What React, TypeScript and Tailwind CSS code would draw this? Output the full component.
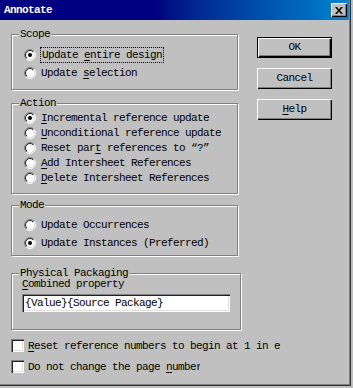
import React from "react";

const font = { fontFamily: '"Liberation Mono", "DejaVu Sans Mono", monospace' };

function Radio({ id, checked }: { id: string; checked?: boolean }) {
  return (
    <svg width="12" height="12" viewBox="0 0 12 12" className="shrink-0">
      <defs>
        <linearGradient id={id + "a"} x1="0" y1="0" x2="1" y2="1">
          <stop offset="0.5" stopColor="#808080" />
          <stop offset="0.5" stopColor="#ffffff" />
        </linearGradient>
        <linearGradient id={id + "b"} x1="0" y1="0" x2="1" y2="1">
          <stop offset="0.5" stopColor="#202020" />
          <stop offset="0.5" stopColor="#dfdfdf" />
        </linearGradient>
      </defs>
      <circle cx="6" cy="6" r="5.5" fill="none" stroke={`url(#${id}a)`} />
      <circle cx="6" cy="6" r="4.5" fill="#fff" stroke={`url(#${id}b)`} />
      {checked && <circle cx="6" cy="6" r="2" fill="#000" />}
    </svg>
  );
}

function Option({ id, checked, children }: { id: string; checked?: boolean; children: React.ReactNode }) {
  return (
    <div className="flex items-center gap-[5px] h-full">
      <Radio id={id} checked={checked} />
      <span className="leading-[12px] whitespace-nowrap">{children}</span>
    </div>
  );
}

function U({ children }: { children: React.ReactNode }) {
  return <span className="underline underline-offset-[2px]">{children}</span>;
}

function Group({ title, className, children }: { title: string; className: string; children: React.ReactNode }) {
  return (
    <fieldset
      className={
        "border border-[#808080] shadow-[1px_1px_0_#fff,inset_1px_1px_0_#fff] " + className
      }
    >
      <legend className="ml-[7px] px-[1px] leading-[12px] bg-[#c0c0c0] relative">{title}</legend>
      {children}
    </fieldset>
  );
}

function Button({ children, def }: { children: React.ReactNode; def?: boolean }) {
  return (
    <div
      className={
        "w-[75px] h-[21px] flex items-center justify-center bg-[#c0c0c0] " +
        (def
          ? "border border-black shadow-[inset_1px_1px_0_#fff,inset_-1px_-1px_0_#000,inset_-2px_-2px_0_#808080]"
          : "shadow-[inset_1px_1px_0_#fff,inset_-1px_-1px_0_#000,inset_-2px_-2px_0_#808080]")
      }
    >
      {children}
    </div>
  );
}

function Check({ children, clip }: { children: React.ReactNode; clip?: boolean }) {
  return (
    <div className="flex items-center h-[21px] gap-[4px]">
      <div className="w-[13px] h-[13px] bg-white shrink-0 shadow-[inset_1px_1px_0_#808080,inset_2px_2px_0_#202020,inset_-1px_-1px_0_#fff,inset_-2px_-2px_0_#dfdfdf]" />
      <div className={"whitespace-nowrap leading-[12px] " + (clip ? "w-[172px] overflow-hidden" : "")}>
        {children}
      </div>
    </div>
  );
}

export default function App() {
  return (
    <div
      className="w-[353px] h-[388px] bg-[#c0c0c0] text-black text-[11px] tracking-[-0.6px]"
      style={font}
    >
      <div className="w-[351px] h-[386px] flex flex-col shadow-[inset_-1px_-1px_0_#303030,inset_-2px_-2px_0_#808080]">
        {/* title bar */}
        <div className="h-[20px] mr-[2px] flex items-center justify-between pl-[4px] pr-[2px] bg-gradient-to-r from-[#000080] from-45% to-[#1084d0]">
          <span className="text-white font-bold leading-[12px]">Annotate</span>
          <div className="w-[16px] h-[14px] flex items-center justify-center bg-[#c0c0c0] shadow-[inset_1px_1px_0_#fff,inset_-1px_-1px_0_#000,inset_-2px_-2px_0_#808080]">
            <svg width="8" height="7" viewBox="0 0 8 7">
              <path d="M0 0h2l2 2.5L6 0h2L5 3.5 8 7H6L4 4.5 2 7H0l3-3.5z" fill="#000" />
            </svg>
          </div>
        </div>

        <div className="flex pl-[11px]">
          {/* left column */}
          <div className="w-[227px] pt-[8px]">
            <Group title="Scope" className="h-[62px]">
              <div className="pl-[12px] pt-[6px]">
                <div className="h-[18px]">
                  <Option id="s1" checked>
                    <span className="outline outline-1 outline-dotted outline-black px-[1px] py-[1px]">
                      Update <U>e</U>ntire design
                    </span>
                  </Option>
                </div>
                <div className="h-[18px]">
                  <Option id="s2">
                    Update <U>s</U>election
                  </Option>
                </div>
              </div>
            </Group>

            <Group title="Action" className="mt-[7px] h-[97px]">
              <div className="pl-[12px] pt-[1px]">
                <div className="h-[15px]">
                  <Option id="a1" checked>
                    <U>I</U>ncremental reference update
                  </Option>
                </div>
                <div className="h-[15px]">
                  <Option id="a2">
                    <U>U</U>nconditional reference update
                  </Option>
                </div>
                <div className="h-[15px]">
                  <Option id="a3">
                    Reset par<U>t</U> references to “?”
                  </Option>
                </div>
                <div className="h-[15px]">
                  <Option id="a4">
                    <U>A</U>dd Intersheet References
                  </Option>
                </div>
                <div className="h-[15px]">
                  <Option id="a5">
                    <U>D</U>elete Intersheet References
                  </Option>
                </div>
              </div>
            </Group>

            <Group title="Mode" className="mt-[5px] h-[57px]">
              <div className="pl-[12px] pt-[5px]">
                <div className="h-[18px]">
                  <Option id="m1">Update Occurrences</Option>
                </div>
                <div className="h-[18px]">
                  <Option id="m2" checked>
                    Update Instances (Preferred)
                  </Option>
                </div>
              </div>
            </Group>

            <Group title="Physical Packaging" className="mt-[11px] h-[63px]">
              <div className="px-[10px]">
                <div className="leading-[11px]">
                  <U>C</U>ombined property
                </div>
                <div className="mt-[4px] w-[208px] h-[18px] bg-white flex items-center pl-[3px] shadow-[inset_1px_1px_0_#808080,inset_2px_2px_0_#202020,inset_-1px_-1px_0_#fff,inset_-2px_-2px_0_#dfdfdf]">
                  <span className="leading-[12px]">{"{Value}{Source Package}"}</span>
                </div>
              </div>
            </Group>
          </div>

          {/* buttons */}
          <div className="ml-[19px] pt-[17px] flex flex-col gap-[10px]">
            <Button def>OK</Button>
            <Button>Cancel</Button>
            <Button>
              <span>
                <U>H</U>elp
              </span>
            </Button>
          </div>
        </div>

        {/* checkboxes */}
        <div className="mt-[5px] pl-[11px]">
          <Check>
            <U>R</U>eset reference numbers to begin at 1 in e
          </Check>
          <Check clip>
            Do not change the page <U>n</U>umber
          </Check>
        </div>
      </div>
    </div>
  );
}
